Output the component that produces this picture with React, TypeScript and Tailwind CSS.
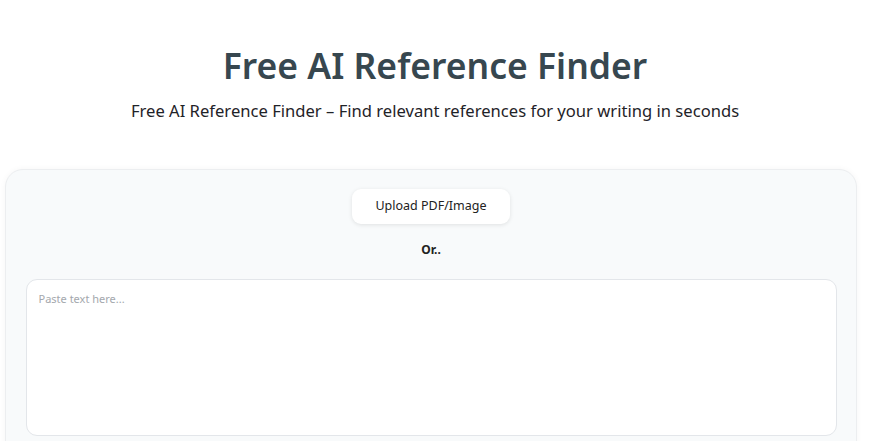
export default function App() {
  return (
    <div
      className="w-[870px] h-[441px] overflow-hidden bg-white"
      style={{ fontFamily: '"Noto Sans", "Open Sans", sans-serif' }}
    >
      <div className="flex flex-col items-center pt-[41px]">
        <h1 className="text-[35.5px] leading-[48px] font-semibold text-[#37474f]">
          Free AI Reference Finder
        </h1>
        <p className="mt-[10px] text-[16.6px] leading-[24px] text-[#1f2328]">
          Free AI Reference Finder – Find relevant references for your writing in seconds
        </p>
      </div>
      <div className="mt-[46px] mx-[5px] w-[852px] rounded-t-[18px] border border-[#eceef0] bg-[#f8fafb] shadow-[0_0_6px_rgba(0,0,0,0.04)] px-[20px] pt-[19px] pb-[20px] flex flex-col items-center">
        <button className="w-[158px] h-[35px] rounded-[9px] bg-white text-[12.5px] text-[#222] shadow-[0_1px_4px_rgba(0,0,0,0.1)]">
          Upload PDF/Image
        </button>
        <div className="mt-[18px] text-[12px] leading-[16px] font-bold text-[#222]">Or..</div>
        <div className="mt-[21px] w-[811px] h-[157px] rounded-[11px] border border-[#e3e6ea] bg-white px-[12px] pt-[11px]">
          <div className="text-[11px] leading-[16px] text-[#a4a8ad]">Paste text here...</div>
        </div>
      </div>
    </div>
  );
}
